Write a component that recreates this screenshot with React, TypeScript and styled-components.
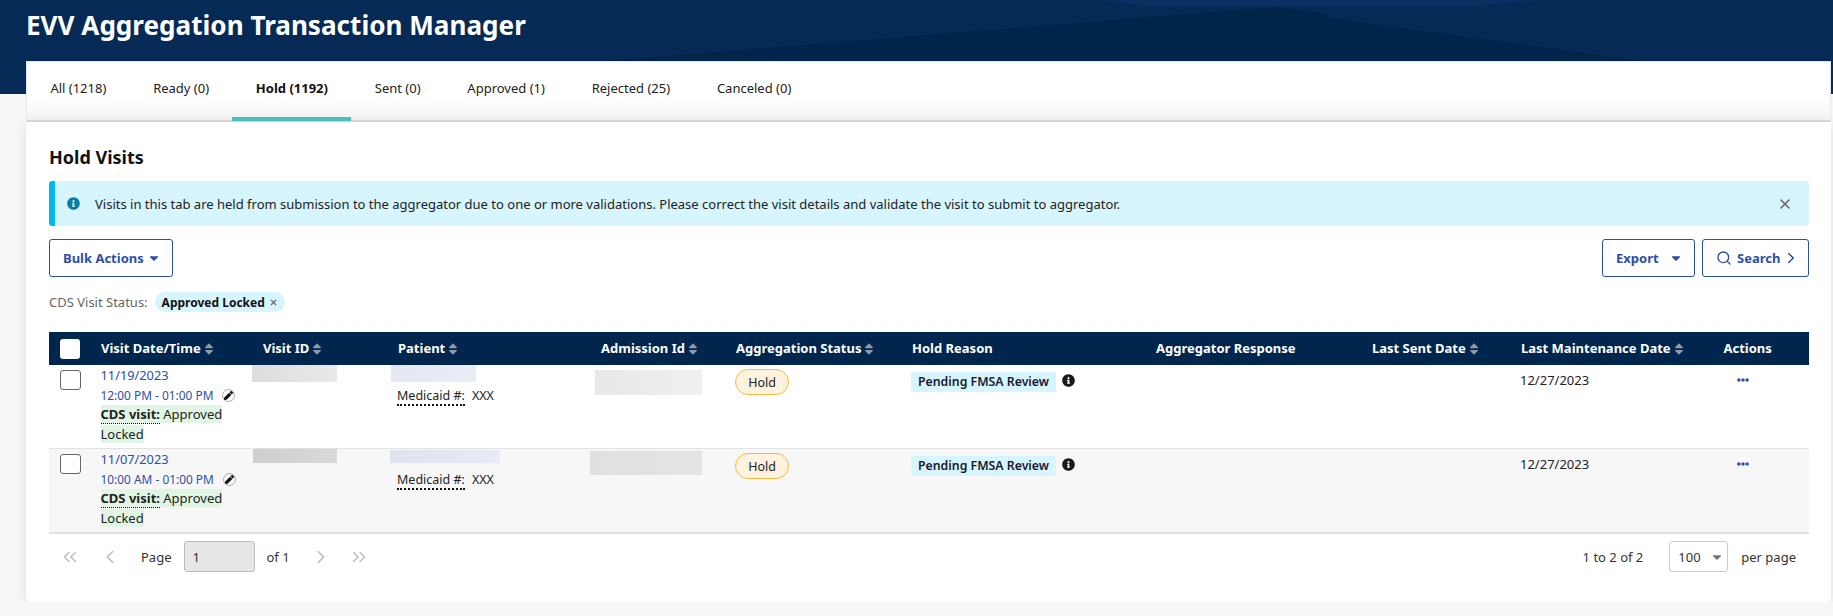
import React from 'react';
import styled, { createGlobalStyle } from 'styled-components';
import { ChevronLeft, ChevronRight, ChevronsLeft, ChevronsRight, Search, X } from 'lucide-react';
import { FaCaretDown, FaEllipsisH, FaInfoCircle, FaPen, FaSort } from 'react-icons/fa';

const COLUMNS = '41px 162px 135px 203px 135px 176px 244px 216px 149px 202.5px 96.5px';
const BLUE = '#2c4fa8';

const GlobalStyle = createGlobalStyle`
  html, body {
    margin: 0;
    background: #f7f7f7;
    overflow: hidden;
  }
  body {
    font-family: "Noto Sans", "Liberation Sans", sans-serif;
    font-size: 13px;
    color: #222;
  }
  * {
    box-sizing: border-box;
  }
`;

const Banner = styled.header`
  position: relative;
  height: 94px;
  padding-left: 26px;
  background: #052a56;
`;

const BannerArt = styled.svg`
  position: absolute;
  top: 0;
  left: 0;
`;

const Title = styled.h1`
  position: relative;
  margin: 0;
  font-size: 26.1px;
  line-height: 50px;
  font-weight: 700;
  color: #fff;
`;

const Content = styled.main`
  margin-top: -33px;
  padding: 0 2px 0 26px;
  position: relative;
`;

const TabBar = styled.nav`
  display: flex;
  height: 61px;
  border: 1px solid #e4e7ea;
  border-bottom: 2px solid #dcdcdc;
  background: linear-gradient(to bottom, #fff 0%, #fff 62%, #f4f4f4 100%);
`;

const Tab = styled.div<{ $active?: boolean }>`
  height: 59px;
  padding: 0 23.4px;
  line-height: 53px;
  font-size: 13px;
  white-space: nowrap;
  font-weight: ${p => (p.$active ? 700 : 400)};
  color: ${p => (p.$active ? '#111' : '#222')};
  border-bottom: 4px solid ${p => (p.$active ? '#4bc0b8' : 'transparent')};
`;

const Card = styled.section`
  height: 480px;
  padding: 0 22px 0 23px;
  background: #fff;
  border-radius: 0 0 3px 3px;
  box-shadow: 0 2px 14px rgba(0, 0, 0, 0.1);
`;

const Heading = styled.h2`
  margin: 0;
  padding-top: 21px;
  height: 59px;
  font-size: 18px;
  line-height: 28px;
  font-weight: 700;
  color: #111;
`;

const Alert = styled.div`
  display: flex;
  align-items: center;
  height: 45px;
  padding: 0 16px 0 12px;
  background: #d6f5fe;
  border-left: 6px solid #00b9f2;
  border-radius: 3px;
  font-size: 13px;
  color: #222;
`;

const AlertText = styled.span`
  flex: 1;
  margin-left: 15px;
`;

const AlertInfo = styled(FaInfoCircle)`
  color: #0a7ea4;
  font-size: 13px;
`;

const CloseIcon = styled(X)`
  color: #666;
`;

const ActionRow = styled.div`
  display: flex;
  justify-content: space-between;
  margin-top: 13px;
`;

const ButtonGroup = styled.div`
  display: flex;
  gap: 7px;
`;

const OutlineButton = styled.button<{ $width: number }>`
  display: flex;
  align-items: center;
  justify-content: space-between;
  width: ${p => p.$width}px;
  height: 38px;
  padding: 0 11px 0 13px;
  background: #fff;
  border: 1px solid ${BLUE};
  border-radius: 3px;
  font-family: inherit;
  font-size: 13px;
  font-weight: 700;
  color: ${BLUE};
`;

const SearchLabel = styled.span`
  display: flex;
  align-items: center;
  gap: 5px;
`;

const SearchChevron = styled(ChevronRight)`
  margin-right: -3px;
`;

const FilterRow = styled.div`
  display: flex;
  align-items: center;
  gap: 7px;
  margin-top: 15px;
  height: 20px;
  font-size: 13px;
  color: #666;
`;

const FilterChip = styled.span`
  display: flex;
  align-items: center;
  gap: 4px;
  height: 20px;
  padding: 0 7px;
  background: #d6f5fe;
  border-radius: 10px;
  font-size: 12px;
  font-weight: 700;
  color: #111;
`;

const ChipClose = styled(X)`
  color: #666;
`;

const Table = styled.div`
  margin-top: 20px;
`;

const HeadRow = styled.div`
  display: grid;
  grid-template-columns: ${COLUMNS};
  align-items: center;
  height: 33px;
  background: #00264d;
`;

const HeadCell = styled.div`
  display: flex;
  align-items: center;
  gap: 1px;
  padding-left: 11px;
  font-size: 13px;
  font-weight: 700;
  color: #fff;
  white-space: nowrap;
`;

const HeadLabel = styled.span`
  margin-top: -2px;
`;

const SortIcon = styled(FaSort)`
  color: #8d9bab;
  font-size: 14px;
`;

const HeadCheck = styled.span`
  display: block;
  width: 20px;
  height: 20px;
  background: #fff;
  border-radius: 3px;
`;

const Row = styled.div<{ $shaded?: boolean }>`
  display: grid;
  grid-template-columns: ${COLUMNS};
  height: ${p => (p.$shaded ? 85 : 84)}px;
  background: ${p => (p.$shaded ? '#f7f7f7' : '#fff')};
  border-bottom: ${p => (p.$shaded ? '2px solid #e2e2e2' : '1px solid #e2e2e2')};
`;

const Cell = styled.div<{ $top?: number }>`
  min-width: 0;
  padding: ${p => p.$top ?? 0}px 0 0 11px;
`;

const VisitCell = styled.div`
  min-width: 0;
  padding-left: 10.5px;
`;

const RowCheck = styled.span`
  display: block;
  width: 21px;
  height: 20px;
  background: #fff;
  border: 1px solid #666;
  border-radius: 3px;
`;

const DateLine = styled.div`
  font-size: 12.8px;
  line-height: 20px;
  color: ${BLUE};
`;

const TimeLine = styled.div`
  display: flex;
  align-items: center;
  gap: 9px;
  font-size: 11.9px;
  line-height: 20px;
  color: ${BLUE};
`;

const EditBadge = styled.span`
  display: flex;
  align-items: center;
  justify-content: center;
  width: 13px;
  height: 13px;
  border: 1.5px solid #aaa;
  border-radius: 50%;
  color: #111;
  font-size: 9px;
`;

const CdsLine = styled.div`
  margin-top: -1px;
  font-size: 13px;
  line-height: 20px;
  color: #222;
`;

const CdsText = styled.span`
  background: #e0f5e3;
`;

const CdsLabel = styled.strong`
  font-weight: 700;
  border-bottom: 1px dotted #111;
`;

const Redacted = styled.div<{ $w: number; $h: number; $x: number; $y?: number; $tone: string; $fade: string }>`
  width: ${p => p.$w}px;
  height: ${p => p.$h}px;
  margin: ${p => p.$y ?? 0}px 0 0 ${p => p.$x}px;
  background: linear-gradient(to right, ${p => p.$tone}, ${p => p.$fade});
`;

const MedicaidLine = styled.div<{ $top: number }>`
  display: flex;
  gap: 7px;
  margin: ${p => p.$top}px 0 0 -1px;
  font-size: 12.5px;
  line-height: 17px;
  color: #222;
`;

const MedicaidLabel = styled.span`
  border-bottom: 2px dotted #111;
`;

const HoldBadge = styled.span`
  display: inline-flex;
  align-items: center;
  justify-content: center;
  width: 54px;
  height: 26px;
  margin-left: -1px;
  background: #fff3df;
  border: 1px solid #f5b93e;
  border-radius: 13px;
  font-size: 12.5px;
  color: #222;
`;

const ReasonWrap = styled.div`
  display: flex;
  align-items: center;
  gap: 6px;
  margin-left: -1px;
`;

const ReasonTag = styled.span`
  height: 20px;
  padding: 0 7px;
  background: #d6f5fe;
  border-radius: 3px;
  font-size: 12.3px;
  font-weight: 600;
  line-height: 20px;
  color: #1a1a2e;
  white-space: nowrap;
`;

const ReasonInfo = styled(FaInfoCircle)`
  color: #1a1a1a;
  font-size: 13px;
  margin-top: -4px;
`;

const MaintDate = styled.div`
  margin-left: -1px;
  font-size: 13px;
  line-height: 17px;
  color: #222;
`;

const MoreIcon = styled(FaEllipsisH)`
  display: block;
  margin-left: 13px;
  color: ${BLUE};
  font-size: 12px;
`;

const Pager = styled.div`
  display: flex;
  align-items: center;
  justify-content: space-between;
  margin-top: 7px;
  height: 31px;
  padding-right: 13px;
  font-size: 13px;
  color: #333;
`;

const PagerSide = styled.div`
  display: flex;
  align-items: center;
`;

const PagerNav = styled.span<{ $left: number }>`
  display: flex;
  margin-left: ${p => p.$left}px;
  color: #b5b5b5;
`;

const PagerText = styled.span<{ $left: number }>`
  margin-left: ${p => p.$left}px;
  white-space: nowrap;
`;

const PageInput = styled.span`
  display: flex;
  align-items: center;
  width: 71px;
  height: 31px;
  margin-left: 12px;
  padding-left: 8px;
  background: #e6e6e6;
  border: 1px solid #bbb;
  border-radius: 3px;
`;

const PageSize = styled.span`
  display: flex;
  align-items: center;
  justify-content: space-between;
  width: 59px;
  height: 31px;
  margin-left: 26px;
  padding: 0 3px 0 8px;
  background: #fff;
  border: 1px solid #ccc;
  border-radius: 3px;
`;

const SizeCaret = styled(FaCaretDown)`
  color: #777;
  font-size: 14px;
`;

const TABS = [
  { label: 'All (1218)' },
  { label: 'Ready (0)' },
  { label: 'Hold (1192)', active: true },
  { label: 'Sent (0)' },
  { label: 'Approved (1)' },
  { label: 'Rejected (25)' },
  { label: 'Canceled (0)' },
];

const HEADERS = [
  { label: 'Visit Date/Time', sort: true },
  { label: 'Visit ID', sort: true },
  { label: 'Patient', sort: true },
  { label: 'Admission Id', sort: true },
  { label: 'Aggregation Status', sort: true },
  { label: 'Hold Reason' },
  { label: 'Aggregator Response' },
  { label: 'Last Sent Date', sort: true },
  { label: 'Last Maintenance Date', sort: true },
  { label: 'Actions' },
];

const VISITS = [
  {
    date: '11/19/2023',
    time: '12:00 PM - 01:00 PM',
    visitId: { $w: 85, $h: 17, $x: -11, $tone: '#dddddd', $fade: '#e9e9e9' },
    patient: { $w: 85, $h: 17, $x: -7, $tone: '#e4e8f3', $fade: '#e9edf6' },
    medicaidTop: 5,
    admission: { $w: 107, $h: 25, $x: -6, $y: 5, $tone: '#e8e8e8', $fade: '#f0f0f0' },
  },
  {
    date: '11/07/2023',
    time: '10:00 AM - 01:00 PM',
    visitId: { $w: 84, $h: 14, $x: -10, $tone: '#cfcfcf', $fade: '#d9d9d9' },
    patient: { $w: 110, $h: 13, $x: -8, $y: 1, $tone: '#dfe3ef', $fade: '#e8ebf4' },
    medicaidTop: 8,
    admission: { $w: 112, $h: 24, $x: -11, $y: 2, $tone: '#e0e0e0', $fade: '#e4e4e4' },
  },
];

function App() {
  return (
    <>
      <GlobalStyle />
      <Banner>
        <BannerArt width="1833" height="94" aria-hidden="true">
          <polygon points="1101,0 1149,6 1470,6 1542,0" fill="#0a2f63" />
          <polygon points="604,61 1276,7 1328,14 1328,18 1643,61" fill="#00254a" />
        </BannerArt>
        <Title>EVV Aggregation Transaction Manager</Title>
      </Banner>
      <Content>
        <TabBar>
          {TABS.map(tab => (
            <Tab key={tab.label} $active={tab.active}>
              {tab.label}
            </Tab>
          ))}
        </TabBar>
        <Card>
          <Heading>Hold Visits</Heading>
          <Alert>
            <AlertInfo />
            <AlertText>
              Visits in this tab are held from submission to the aggregator due to one or more validations. Please
              correct the visit details and validate the visit to submit to aggregator.
            </AlertText>
            <CloseIcon size={16} strokeWidth={2.4} />
          </Alert>
          <ActionRow>
            <OutlineButton type="button" $width={124}>
              Bulk Actions
              <FaCaretDown size={14} />
            </OutlineButton>
            <ButtonGroup>
              <OutlineButton type="button" $width={93}>
                Export
                <FaCaretDown size={14} />
              </OutlineButton>
              <OutlineButton type="button" $width={107}>
                <SearchLabel>
                  <Search size={16} />
                  Search
                </SearchLabel>
                <SearchChevron size={18} />
              </OutlineButton>
            </ButtonGroup>
          </ActionRow>
          <FilterRow>
            CDS Visit Status:
            <FilterChip>
              Approved Locked
              <ChipClose size={9} strokeWidth={3} />
            </FilterChip>
          </FilterRow>
          <Table>
            <HeadRow>
              <HeadCell>
                <HeadCheck />
              </HeadCell>
              {HEADERS.map(head => (
                <HeadCell key={head.label}>
                  <HeadLabel>{head.label}</HeadLabel>
                  {head.sort && <SortIcon />}
                </HeadCell>
              ))}
            </HeadRow>
            {VISITS.map((visit, index) => (
              <Row key={visit.date} $shaded={index === 1}>
                <Cell $top={5}>
                  <RowCheck />
                </Cell>
                <VisitCell>
                  <DateLine>{visit.date}</DateLine>
                  <TimeLine>
                    {visit.time}
                    <EditBadge>
                      <FaPen />
                    </EditBadge>
                  </TimeLine>
                  <CdsLine>
                    <CdsText>
                      <CdsLabel>CDS visit:</CdsLabel> Approved
                    </CdsText>
                    <br />
                    <CdsText>Locked</CdsText>
                  </CdsLine>
                </VisitCell>
                <Cell>
                  <Redacted {...visit.visitId} />
                </Cell>
                <Cell>
                  <Redacted {...visit.patient} />
                  <MedicaidLine $top={visit.medicaidTop}>
                    <MedicaidLabel>Medicaid #:</MedicaidLabel>
                    XXX
                  </MedicaidLine>
                </Cell>
                <Cell>
                  <Redacted {...visit.admission} />
                </Cell>
                <Cell $top={4}>
                  <HoldBadge>Hold</HoldBadge>
                </Cell>
                <Cell $top={7}>
                  <ReasonWrap>
                    <ReasonTag>Pending FMSA Review</ReasonTag>
                    <ReasonInfo />
                  </ReasonWrap>
                </Cell>
                <Cell />
                <Cell />
                <Cell $top={7}>
                  <MaintDate>12/27/2023</MaintDate>
                </Cell>
                <Cell $top={9}>
                  <MoreIcon />
                </Cell>
              </Row>
            ))}
          </Table>
          <Pager>
            <PagerSide>
              <PagerNav $left={10}>
                <ChevronsLeft size={22} strokeWidth={1.4} />
              </PagerNav>
              <PagerNav $left={18}>
                <ChevronLeft size={22} strokeWidth={1.4} />
              </PagerNav>
              <PagerText $left={20}>Page</PagerText>
              <PageInput>1</PageInput>
              <PagerText $left={12}>of 1</PagerText>
              <PagerNav $left={20}>
                <ChevronRight size={22} strokeWidth={1.4} />
              </PagerNav>
              <PagerNav $left={16}>
                <ChevronsRight size={22} strokeWidth={1.4} />
              </PagerNav>
            </PagerSide>
            <PagerSide>
              <PagerText $left={0}>1 to 2 of 2</PagerText>
              <PageSize>
                100
                <SizeCaret />
              </PageSize>
              <PagerText $left={13}>per page</PagerText>
            </PagerSide>
          </Pager>
        </Card>
      </Content>
    </>
  );
}

export default App;
